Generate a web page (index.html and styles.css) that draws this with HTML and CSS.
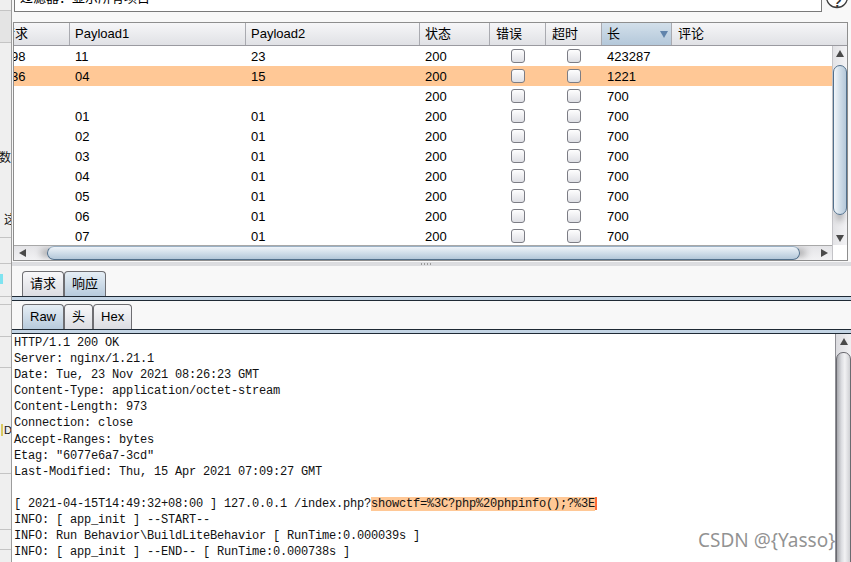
FILE: index.html
```html
<!DOCTYPE html>
<html lang="zh">
<head>
<meta charset="utf-8">
<title>Intruder result</title>
<link rel="stylesheet" href="styles.css">
</head>
<body>
<div class="app">
  <div class="side">
    <div class="sb h11 line"></div>
    <div class="sb h32 line shade"></div>
    <div class="sb h100"></div>
    <div class="sb h26 stxt"><span>的数</span></div>
    <div class="sb h37"></div>
    <div class="sb h24 stxt left"><span>这</span></div>
    <div class="sb h8 line"></div>
    <div class="sb h26 line"></div>
    <div class="sb h20"><span class="cyan"></span></div>
    <div class="sb h13 line"></div>
    <div class="sb h8 line"></div>
    <div class="sb h32 line"></div>
    <div class="sb h31 line"></div>
    <div class="sb h54"></div>
    <div class="sb h16 stxt left"><span class="dbox">D</span></div>
    <div class="sb h36 line"></div>
    <div class="sb h56 line"></div>
    <div class="sb h20 line"></div>
  </div>

  <div class="main">
    <div class="filter-row">
      <div class="filter"><span class="filter-text">过滤器：显示所有项目</span></div>
      <svg class="help" width="24" height="12" viewBox="0 0 24 12">
        <circle cx="11" cy="-3" r="10.5" fill="#fff" stroke="#3c3c3c" stroke-width="1.3"/>
        <text x="11.5" y="6.5" text-anchor="middle" font-family="Liberation Sans, sans-serif" font-size="14" font-weight="bold" fill="#333">?</text>
      </svg>
    </div>

    <div class="table">
      <div class="thead">
        <div class="th first"><span>请求</span></div>
        <div class="th">Payload1</div>
        <div class="th">Payload2</div>
        <div class="th">状态</div>
        <div class="th cjk">错误</div>
        <div class="th cjk">超时</div>
        <div class="th sorted"><span>长</span><span class="sort-arrow"></span></div>
        <div class="th last">评论</div>
      </div>
      <div class="tbody">
        <div class="rows">
          <div class="row"><div class="cell first">98</div><div class="cell">11</div><div class="cell">23</div><div class="cell">200</div><div class="cell cbc"><span class="cb"></span></div><div class="cell cbc"><span class="cb"></span></div><div class="cell">423287</div><div class="cell"></div></div>
          <div class="row sel"><div class="cell first">36</div><div class="cell">04</div><div class="cell">15</div><div class="cell">200</div><div class="cell cbc"><span class="cb"></span></div><div class="cell cbc"><span class="cb"></span></div><div class="cell">1221</div><div class="cell"></div></div>
          <div class="row"><div class="cell first"></div><div class="cell"></div><div class="cell"></div><div class="cell">200</div><div class="cell cbc"><span class="cb"></span></div><div class="cell cbc"><span class="cb"></span></div><div class="cell">700</div><div class="cell"></div></div>
          <div class="row"><div class="cell first"></div><div class="cell">01</div><div class="cell">01</div><div class="cell">200</div><div class="cell cbc"><span class="cb"></span></div><div class="cell cbc"><span class="cb"></span></div><div class="cell">700</div><div class="cell"></div></div>
          <div class="row"><div class="cell first"></div><div class="cell">02</div><div class="cell">01</div><div class="cell">200</div><div class="cell cbc"><span class="cb"></span></div><div class="cell cbc"><span class="cb"></span></div><div class="cell">700</div><div class="cell"></div></div>
          <div class="row"><div class="cell first"></div><div class="cell">03</div><div class="cell">01</div><div class="cell">200</div><div class="cell cbc"><span class="cb"></span></div><div class="cell cbc"><span class="cb"></span></div><div class="cell">700</div><div class="cell"></div></div>
          <div class="row"><div class="cell first"></div><div class="cell">04</div><div class="cell">01</div><div class="cell">200</div><div class="cell cbc"><span class="cb"></span></div><div class="cell cbc"><span class="cb"></span></div><div class="cell">700</div><div class="cell"></div></div>
          <div class="row"><div class="cell first"></div><div class="cell">05</div><div class="cell">01</div><div class="cell">200</div><div class="cell cbc"><span class="cb"></span></div><div class="cell cbc"><span class="cb"></span></div><div class="cell">700</div><div class="cell"></div></div>
          <div class="row"><div class="cell first"></div><div class="cell">06</div><div class="cell">01</div><div class="cell">200</div><div class="cell cbc"><span class="cb"></span></div><div class="cell cbc"><span class="cb"></span></div><div class="cell">700</div><div class="cell"></div></div>
          <div class="row"><div class="cell first"></div><div class="cell">07</div><div class="cell">01</div><div class="cell">200</div><div class="cell cbc"><span class="cb"></span></div><div class="cell cbc"><span class="cb"></span></div><div class="cell">700</div><div class="cell"></div></div>
        </div>
        <div class="vs">
          <div class="vbtn"><span class="tri up"></span></div>
          <div class="vthumb"></div>
          <div class="vfill"></div>
          <div class="vbtn"><span class="tri down"></span></div>
        </div>
      </div>
      <div class="hs">
        <div class="hbtn"><span class="tri left"></span></div>
        <div class="htrack"><div class="hthumb"></div></div>
        <div class="hbtn"><span class="tri right"></span></div>
        <div class="corner"></div>
      </div>
    </div>

    <div class="splitter"><div class="split-bar"><span class="grip"></span></div></div>

    <div class="tabs">
      <div class="tab">请求</div>
      <div class="tab active">响应</div>
    </div>
    <div class="tabline"></div>
    <div class="tabs sub">
      <div class="tab active">Raw</div>
      <div class="tab">头</div>
      <div class="tab">Hex</div>
    </div>
    <div class="tabline"></div>

    <div class="editor">
<pre class="code">HTTP/1.1 200 OK
Server: nginx/1.21.1
Date: Tue, 23 Nov 2021 08:26:23 GMT
Content-Type: application/octet-stream
Content-Length: 973
Connection: close
Accept-Ranges: bytes
Etag: "6077e6a7-3cd"
Last-Modified: Thu, 15 Apr 2021 07:09:27 GMT

[ 2021-04-15T14:49:32+08:00 ] 127.0.0.1 /index.php?<span class="hl">showctf=%3C?php%20phpinfo();?%3E</span><span class="caret"></span>
INFO: [ app_init ] --START--
INFO: Run Behavior\BuildLiteBehavior [ RunTime:0.000039s ]
INFO: [ app_init ] --END-- [ RunTime:0.000738s ]
INFO: [ app_begin ] --START--
INFO: Run Behavior\ReadHtmlCacheBehavior [ RunTime:0.000151s ]</pre>
      <div class="vs2">
        <div class="vbtn2"><span class="tri up"></span></div>
        <div class="vthumb2"></div>
      </div>
    </div>
  </div>
</div>
<div class="watermark">CSDN @{Yasso}</div>
</body>
</html>
```

FILE: styles.css
```css
* { box-sizing: border-box; }
html, body { margin: 0; padding: 0; }
body {
  width: 851px;
  height: 562px;
  overflow: hidden;
  position: relative;
  background: #f8f8f8;
  font-family: "Liberation Sans", "Noto Sans CJK SC", sans-serif;
  font-size: 13px;
  color: #000;
}
.app { display: flex; height: 562px; }

/* left partial window */
.side {
  width: 12px;
  flex: none;
  background: #efefef;
  border-right: 1px solid #9c9c9c;
  display: flex;
  flex-direction: column;
  overflow: hidden;
}
.sb { flex: none; position: relative; overflow: hidden; }
.sb.line { border-bottom: 1px solid #c4c4c4; }
.sb.shade { background: #e4e4e4; }
.h8 { height: 8px; } .h11 { height: 11px; } .h13 { height: 13px; } .h14 { height: 14px; }
.h16 { height: 16px; } .h20 { height: 20px; } .h24 { height: 24px; } .h26 { height: 26px; }
.h30 { height: 30px; } .h31 { height: 31px; } .h32 { height: 32px; } .h36 { height: 36px; }
.h37 { height: 37px; } .h54 { height: 54px; } .h56 { height: 56px; } .h100 { height: 100px; }
.stxt {
  display: flex;
  justify-content: flex-end;
  align-items: center;
  font-size: 12px;
  white-space: nowrap;
  color: #111;
}
.stxt.left { justify-content: flex-start; padding-left: 4px; }
.stxt.left .dbox { margin-left: -3px; border-left: 2px solid #d8c860; padding-left: 1px; font-size: 11px; }
.cyan { display: block; width: 3px; height: 10px; margin-top: 10px; background: #7fe3f0; }

.main { flex: 1; display: flex; flex-direction: column; min-width: 0; }

/* filter */
.filter-row { height: 22px; flex: none; display: flex; align-items: flex-start; }
.filter {
  margin-left: 2px;
  width: 808px;
  height: 12px;
  border: 1px solid #7a7a7a;
  border-top: none;
  background: #fff;
  overflow: hidden;
  padding-left: 5px;
}
.filter-text { display: block; margin-top: -9px; line-height: 13px; font-size: 13px; white-space: nowrap; }
.help { margin-left: 4px; display: block; }

/* table */
.table {
  margin-left: 1px;
  width: 835px;
  flex: none;
  border: 1px solid #8e8e8e;
  background: #fff;
}
.thead {
  display: grid;
  grid-template-columns: 56px 176px 174px 70px 56px 56px 70px 1fr;
  height: 23px;
  border-bottom: 1px solid #9a9aa0;
  background: linear-gradient(#f6f6f8, #e0e1e5);
}
.th {
  border-right: 1px solid #a9aab0;
  padding-left: 5px;
  line-height: 22px;
  white-space: nowrap;
  overflow: hidden;
}
.th.cjk { padding-left: 6px; }
.th.first span { display: inline-block; margin-left: -17px; }
.th.last { border-right: none; padding-left: 6px; }
.th.sorted {
  background: linear-gradient(#d2dfea, #b4c8da);
  display: flex;
  justify-content: space-between;
  align-items: center;
  padding-right: 3px;
}
.sort-arrow {
  width: 0; height: 0;
  border-left: 4px solid transparent;
  border-right: 4px solid transparent;
  border-top: 7px solid #6184ab;
}

.tbody { display: flex; height: 199px; }
.rows { width: 818px; overflow: hidden; }
.row {
  display: grid;
  grid-template-columns: 56px 176px 174px 70px 56px 56px 70px 1fr;
  height: 20px;
  line-height: 20px;
}
.row.sel { background: #ffc896; }
.cell { padding-left: 5px; padding-top: 1px; white-space: nowrap; overflow: hidden; }
.cell.first { text-indent: -8px; }
.cbc { display: flex; justify-content: center; align-items: center; padding: 0; }
.cb {
  width: 14px; height: 14px;
  border: 1px solid #7c7d85;
  border-radius: 3px;
  background: linear-gradient(#fefefe, #dfe0e5);
}

.vs {
  width: 15px;
  border-left: 1px solid #c4c4c8;
  background: linear-gradient(to right, #e3e3e6, #f3f3f5);
  display: flex;
  flex-direction: column;
}
.vbtn { height: 14px; flex: none; display: flex; justify-content: center; align-items: center; }
.vthumb {
  flex: none;
  margin-top: 5px;
  height: 150px;
  border: 1px solid #52708c;
  border-radius: 7px;
  background: linear-gradient(to right, #f1f5f9, #cddbe7 55%, #b5c8d9);
  box-shadow: 0 10px 6px -4px rgba(0,0,0,0.3);
}
.vfill { flex: 1; }

.tri { width: 0; height: 0; display: block; }
.tri.up { border-left: 4px solid transparent; border-right: 4px solid transparent; border-bottom: 7px solid #4a4a4a; }
.tri.down { border-left: 4px solid transparent; border-right: 4px solid transparent; border-top: 7px solid #4a4a4a; }
.tri.left { border-top: 4px solid transparent; border-bottom: 4px solid transparent; border-right: 7px solid #4a4a4a; }
.tri.right { border-top: 4px solid transparent; border-bottom: 4px solid transparent; border-left: 7px solid #4a4a4a; }

.hs {
  height: 15px;
  border-top: 1px solid #a8a8a8;
  display: flex;
  background: linear-gradient(#e4e4e7, #f2f2f4);
}
.hbtn { width: 16px; flex: none; display: flex; justify-content: center; align-items: center; }
.htrack { flex: 1; overflow: hidden; }
.hthumb {
  margin-left: 17px;
  width: 753px;
  height: 14px;
  border: 1px solid #52708c;
  border-top-color: #9ab0c4;
  border-radius: 7px;
  background: linear-gradient(#eef3f8, #cad9e6 60%, #b3c7d9);
  box-shadow: -10px 0 7px -4px rgba(0,0,0,0.35), 10px 0 7px -4px rgba(0,0,0,0.35);
}
.corner { width: 15px; flex: none; background: #fff; border-left: 1px solid #c4c4c8; margin-top: -1px; }

/* splitter */
.splitter { height: 10px; flex: none; padding-top: 1px; }
.split-bar { height: 4px; background: #dcdde0; display: flex; justify-content: center; align-items: center; padding-right: 10px; }
.grip { width: 12px; height: 2px; background: repeating-linear-gradient(to right, #9a9a9a 0 1px, transparent 1px 3px); }

/* tabs */
.tabs { display: flex; height: 25px; flex: none; padding-left: 10px; align-items: flex-end; }
.tabs.sub { margin-top: 3px; }
.tab {
  height: 25px;
  padding: 0 7px;
  border: 1px solid #6e6e72;
  border-bottom: none;
  border-radius: 4px 4px 0 0;
  background: linear-gradient(#f8f8fa, #dcdde2);
  line-height: 23px;
  font-size: 13px;
  white-space: nowrap;
}
.tab.active { background: linear-gradient(#e6eef5, #b7cadc); }
.tabline {
  height: 5px;
  flex: none;
  border-top: 1px solid #1f2a35;
  border-bottom: 1px solid #1f2a35;
  background: #c3d4e4;
}

/* editor */
.editor { flex: 1; display: flex; min-height: 0; background: #fff; }
.code {
  flex: 1;
  margin: 0;
  padding: 1px 0 0 2px;
  font-family: "Liberation Mono", "DejaVu Sans Mono", monospace;
  font-size: 12px;
  letter-spacing: -0.2px;
  line-height: 16.1px;
  white-space: pre;
  overflow: hidden;
  color: #111;
}
.hl { background: #ffc896; }
.caret { display: inline-block; width: 2px; height: 13px; background: #ff6a35; vertical-align: -3px; }
.vs2 {
  width: 16px;
  flex: none;
  border-left: 1px solid #8f8f95;
  background: linear-gradient(to right, #dcdce0, #f0f0f2);
  display: flex;
  flex-direction: column;
}
.vbtn2 { height: 14px; flex: none; display: flex; justify-content: center; align-items: center; }
.vthumb2 {
  flex: 1;
  margin-top: 4px;
  margin-bottom: -10px;
  border: 1px solid #6a6a70;
  border-radius: 7px 7px 0 0;
  background: linear-gradient(to right, #a7a8ad, #dcdde1 35%, #f2f2f4 60%, #cfd0d4);
}

.watermark {
  position: absolute;
  left: 698px;
  top: 531px;
  font-family: "Noto Sans", sans-serif;
  font-size: 19px;
  line-height: 19px;
  color: rgba(110, 110, 110, 0.75);
  white-space: nowrap;
}
```
